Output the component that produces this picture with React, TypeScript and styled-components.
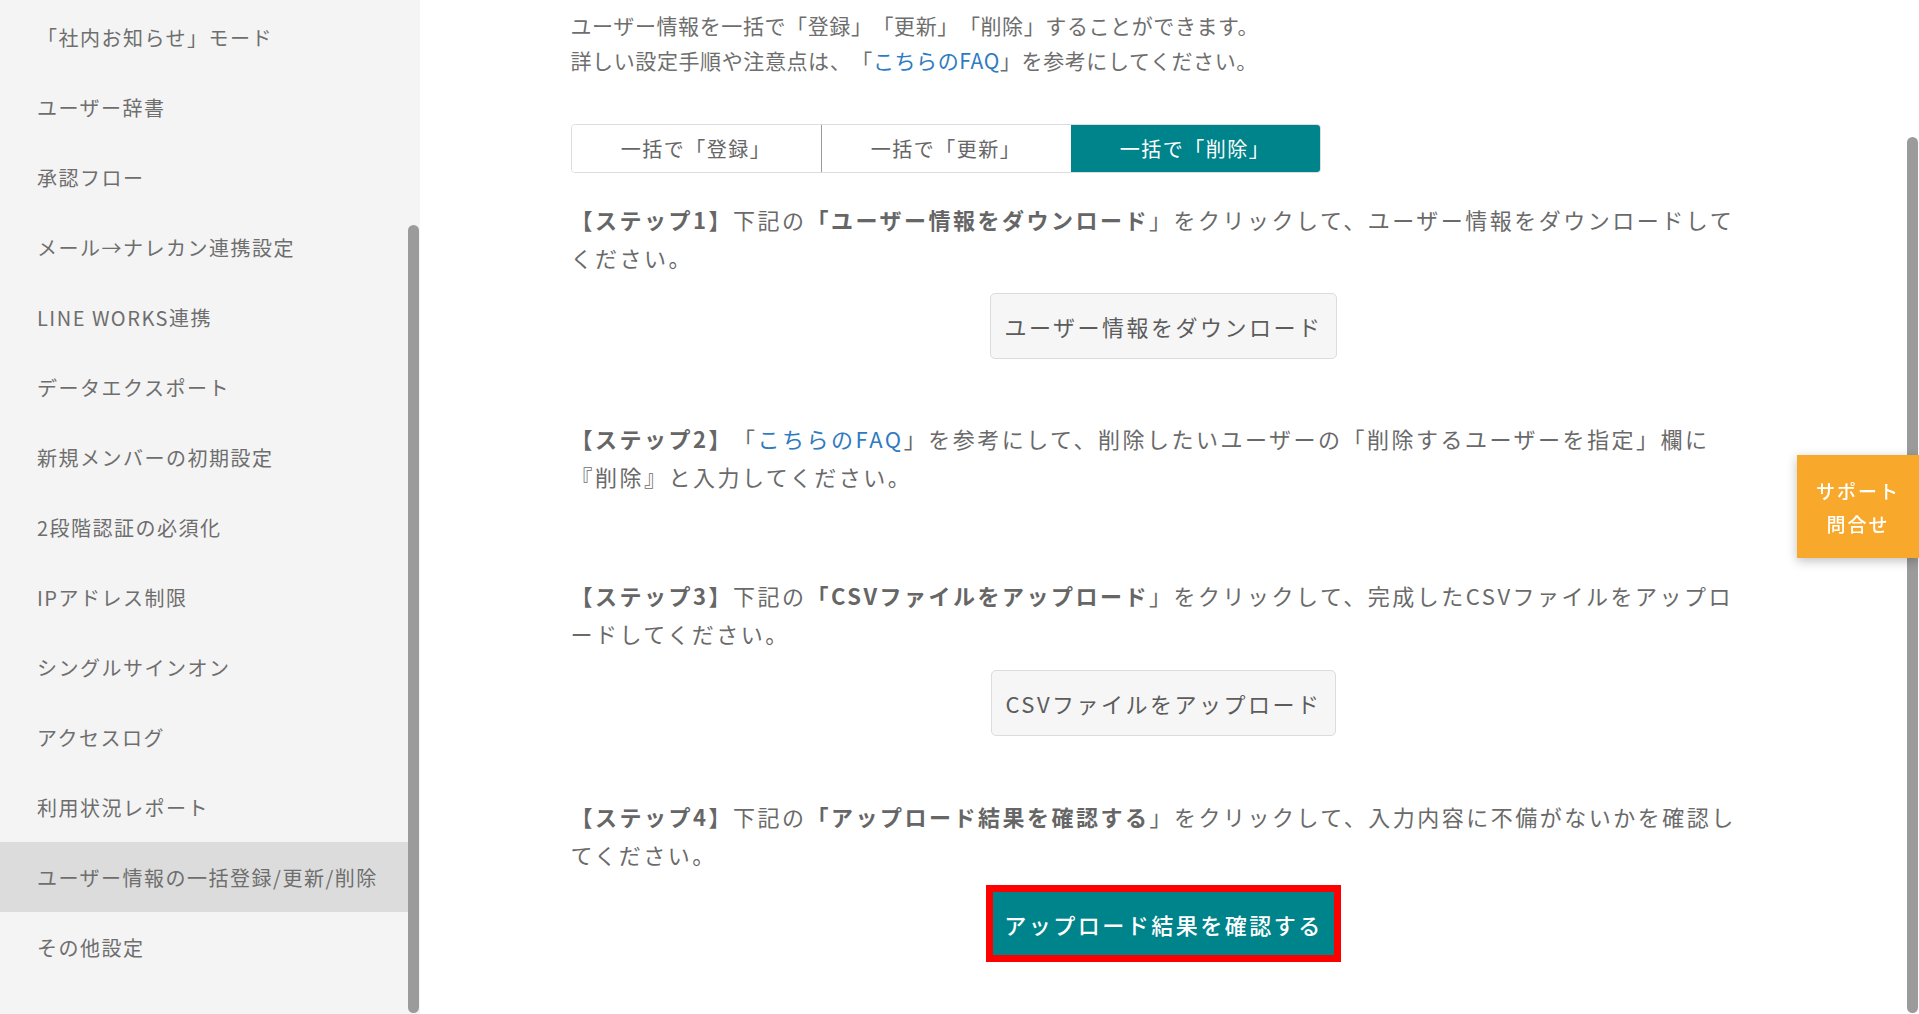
import React from "react";
import styled, { createGlobalStyle } from "styled-components";

const Global = createGlobalStyle`
  html, body { margin: 0; padding: 0; height: 100%; overflow: hidden; background: #fff; }
  body {
    font-family: "Noto Sans CJK JP", "Noto Sans", sans-serif;
    text-spacing-trim: space-all;
  }
  #root { height: 100%; }
`;

const Shell = styled.div`
  display: flex;
  height: 100vh;
`;

const Sidebar = styled.aside`
  width: 420px;
  flex: none;
  display: flex;
  background: #f4f4f4;
`;

const MenuList = styled.ul`
  flex: 1;
  margin: 0;
  padding: 2px 0 0;
  list-style: none;
`;

const MenuItem = styled.li<{ $active?: boolean }>`
  height: 70px;
  display: flex;
  align-items: center;
  padding-left: 37px;
  font-size: 20px;
  letter-spacing: 1.5px;
  color: #6e6e6e;
  background: ${(p) => (p.$active ? "#dcdcdc" : "transparent")};
  white-space: nowrap;
`;

const ScrollTrack = styled.div<{ $top: number; $bg: string }>`
  width: 12px;
  flex: none;
  box-sizing: border-box;
  padding: ${(p) => p.$top}px 1px 1px 0;
  display: flex;
  flex-direction: column;
  background: ${(p) => p.$bg};
`;

const ScrollThumb = styled.div`
  flex: 1;
  background: #9b9b9b;
  border-radius: 6px;
`;

const Main = styled.main`
  flex: 1;
  display: flex;
  min-width: 0;
`;

const ContentArea = styled.div`
  flex: 1;
  overflow: hidden;
`;

const Content = styled.div`
  max-width: 1186px;
  margin: 0 auto;
  padding-top: 8px;
`;

const Intro = styled.p`
  margin: 0;
  font-size: 21px;
  line-height: 35px;
  letter-spacing: 0.6px;
  color: #6e6e6e;
`;

const Link = styled.a`
  color: #2f7bbf;
  text-decoration: none;
`;

const TabGroup = styled.div`
  margin-top: 46px;
  width: 750px;
  height: 49px;
  box-sizing: border-box;
  display: flex;
  border: 1px solid #dddddd;
  border-radius: 4px;
  overflow: hidden;
`;

const Tab = styled.div<{ $active?: boolean; $divider?: boolean }>`
  flex: 1;
  display: flex;
  align-items: center;
  justify-content: center;
  font-size: 20px;
  letter-spacing: 1.5px;
  color: ${(p) => (p.$active ? "#ffffff" : "#666666")};
  background: ${(p) => (p.$active ? "#00848b" : "#ffffff")};
  border-left: ${(p) => (p.$divider ? "1px solid #9a9a9a" : "none")};
`;

const StepBlock = styled.section<{ $gap: number }>`
  margin-top: ${(p) => p.$gap}px;
`;

const StepText = styled.p`
  margin: 0;
  font-size: 22px;
  line-height: 38px;
  letter-spacing: 2.5px;
  color: #6a6a6a;
`;

const Strong = styled.b`
  font-weight: 700;
  color: #666666;
`;

const ButtonRow = styled.div<{ $gap: number }>`
  display: flex;
  justify-content: center;
  margin-top: ${(p) => p.$gap}px;
`;

const Button = styled.button`
  height: 66px;
  box-sizing: border-box;
  padding: 0 13px;
  border: 1px solid #dcdcdc;
  border-radius: 5px;
  background: #f6f6f6;
  color: #5c5c5c;
  font-family: inherit;
  font-size: 22px;
  letter-spacing: 2.5px;
  cursor: pointer;
`;

const PrimaryButton = styled.button`
  height: 63px;
  box-sizing: border-box;
  padding: 0 11px;
  border: none;
  background: #00848b;
  color: #ffffff;
  font-family: inherit;
  font-size: 22px;
  font-weight: 500;
  letter-spacing: 2.5px;
  outline: 7px solid #ff0000;
  cursor: pointer;
`;

const Support = styled.div`
  position: fixed;
  right: 0;
  top: 455px;
  width: 122px;
  height: 103px;
  display: flex;
  flex-direction: column;
  align-items: center;
  justify-content: center;
  background: #f8a82a;
  color: #ffffff;
  font-size: 19px;
  font-weight: 500;
  line-height: 33px;
  letter-spacing: 2px;
  box-shadow: 0 3px 10px rgba(0, 0, 0, 0.25);
`;

const menu = [
  "「社内お知らせ」モード",
  "ユーザー辞書",
  "承認フロー",
  "メール→ナレカン連携設定",
  "LINE WORKS連携",
  "データエクスポート",
  "新規メンバーの初期設定",
  "2段階認証の必須化",
  "IPアドレス制限",
  "シングルサインオン",
  "アクセスログ",
  "利用状況レポート",
  "ユーザー情報の一括登録/更新/削除",
  "その他設定",
];

export default function App() {
  return (
    <>
      <Global />
      <Shell>
        <Sidebar>
          <MenuList>
            {menu.map((m) => (
              <MenuItem key={m} $active={m === "ユーザー情報の一括登録/更新/削除"}>
                {m}
              </MenuItem>
            ))}
          </MenuList>
          <ScrollTrack $top={225} $bg="#f4f4f4">
            <ScrollThumb />
          </ScrollTrack>
        </Sidebar>
        <Main>
          <ContentArea>
            <Content>
              <Intro>
                ユーザー情報を一括で「登録」「更新」「削除」することができます。
                <br />
                詳しい設定手順や注意点は、「<Link href="#">こちらのFAQ</Link>」を参考にしてください。
              </Intro>
              <TabGroup>
                <Tab>一括で「登録」</Tab>
                <Tab $divider>一括で「更新」</Tab>
                <Tab $active>一括で「削除」</Tab>
              </TabGroup>

              <StepBlock $gap={27}>
                <StepText>
                  <Strong>【ステップ1】</Strong>下記の<Strong>「ユーザー情報をダウンロード</Strong>」をクリックして、ユーザー情報をダウンロードしてください。
                </StepText>
                <ButtonRow $gap={17}>
                  <Button>ユーザー情報をダウンロード</Button>
                </ButtonRow>
              </StepBlock>

              <StepBlock $gap={60}>
                <StepText>
                  <Strong>【ステップ2】</Strong>「<Link href="#">こちらのFAQ</Link>」を参考にして、削除したいユーザーの「削除するユーザーを指定」欄に『削除』と入力してください。
                </StepText>
              </StepBlock>

              <StepBlock $gap={81}>
                <StepText>
                  <Strong>【ステップ3】</Strong>下記の<Strong>「CSVファイルをアップロード</Strong>」をクリックして、完成したCSVファイルをアップロードしてください。
                </StepText>
                <ButtonRow $gap={18}>
                  <Button>CSVファイルをアップロード</Button>
                </ButtonRow>
              </StepBlock>

              <StepBlock $gap={61}>
                <StepText>
                  <Strong>【ステップ4】</Strong>下記の<Strong>「アップロード結果を確認する</Strong>」をクリックして、入力内容に不備がないかを確認してください。
                </StepText>
                <ButtonRow $gap={19}>
                  <PrimaryButton>アップロード結果を確認する</PrimaryButton>
                </ButtonRow>
              </StepBlock>
            </Content>
          </ContentArea>
          <ScrollTrack $top={137} $bg="#ffffff">
            <ScrollThumb />
          </ScrollTrack>
        </Main>
      </Shell>
      <Support>
        <span>サポート</span>
        <span>問合せ</span>
      </Support>
    </>
  );
}
